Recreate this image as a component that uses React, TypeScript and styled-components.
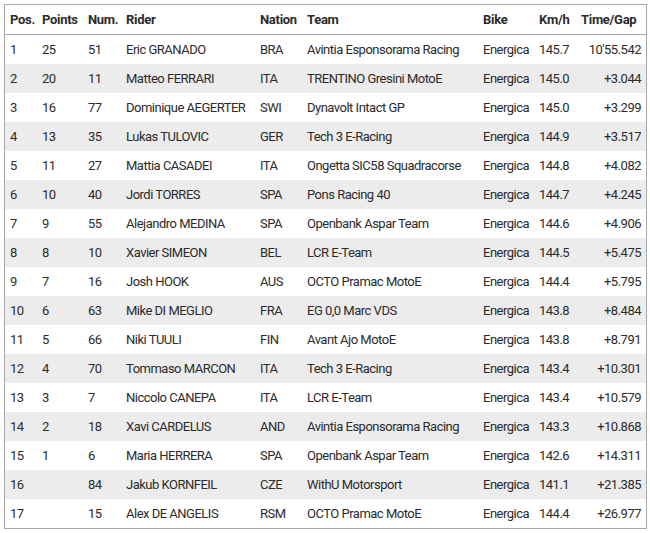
import React from "react";
import styled, { createGlobalStyle } from "styled-components";

const Global = createGlobalStyle`
  html, body { margin: 0; padding: 0; background: #fff; }
  body { padding: 4px; font-family: Roboto, "Noto Sans", sans-serif; }
`;

const cols = "32px 46px 38px 134px 47px 176px 56px 42px 1fr";

const Table = styled.div`
  width: 643px;
  box-sizing: border-box;
  border: 1px solid #a8a8a8;
  color: #2b2b2b;
  font-size: 13px;
  letter-spacing: -0.5px;
`;

const Row = styled.div<{ $band?: boolean; $head?: boolean }>`
  display: grid;
  grid-template-columns: ${cols};
  align-items: center;
  height: 29px;
  background: ${(p) => (p.$band ? "#ececec" : "#fff")};
  font-weight: ${(p) => (p.$head ? 700 : 400)};
  letter-spacing: ${(p) => (p.$head ? "-0.3px" : "-0.5px")};
  border-bottom: ${(p) => (p.$head ? "1px solid #a8a8a8" : "none")};
`;

const Cell = styled.div<{ $right?: boolean }>`
  padding-left: 5px;
  padding-right: ${(p) => (p.$right ? "5px" : "0")};
  text-align: ${(p) => (p.$right ? "right" : "left")};
  white-space: nowrap;
  overflow: hidden;
`;

type R = [string, string, string, string, string, string, string, string, string];

const data: R[] = [
  ["1", "25", "51", "Eric GRANADO", "BRA", "Avintia Esponsorama Racing", "Energica", "145.7", "10'55.542"],
  ["2", "20", "11", "Matteo FERRARI", "ITA", "TRENTINO Gresini MotoE", "Energica", "145.0", "+3.044"],
  ["3", "16", "77", "Dominique AEGERTER", "SWI", "Dynavolt Intact GP", "Energica", "145.0", "+3.299"],
  ["4", "13", "35", "Lukas TULOVIC", "GER", "Tech 3 E-Racing", "Energica", "144.9", "+3.517"],
  ["5", "11", "27", "Mattia CASADEI", "ITA", "Ongetta SIC58 Squadracorse", "Energica", "144.8", "+4.082"],
  ["6", "10", "40", "Jordi TORRES", "SPA", "Pons Racing 40", "Energica", "144.7", "+4.245"],
  ["7", "9", "55", "Alejandro MEDINA", "SPA", "Openbank Aspar Team", "Energica", "144.6", "+4.906"],
  ["8", "8", "10", "Xavier SIMEON", "BEL", "LCR E-Team", "Energica", "144.5", "+5.475"],
  ["9", "7", "16", "Josh HOOK", "AUS", "OCTO Pramac MotoE", "Energica", "144.4", "+5.795"],
  ["10", "6", "63", "Mike DI MEGLIO", "FRA", "EG 0,0 Marc VDS", "Energica", "143.8", "+8.484"],
  ["11", "5", "66", "Niki TUULI", "FIN", "Avant Ajo MotoE", "Energica", "143.8", "+8.791"],
  ["12", "4", "70", "Tommaso MARCON", "ITA", "Tech 3 E-Racing", "Energica", "143.4", "+10.301"],
  ["13", "3", "7", "Niccolo CANEPA", "ITA", "LCR E-Team", "Energica", "143.4", "+10.579"],
  ["14", "2", "18", "Xavi CARDELUS", "AND", "Avintia Esponsorama Racing", "Energica", "143.3", "+10.868"],
  ["15", "1", "6", "Maria HERRERA", "SPA", "Openbank Aspar Team", "Energica", "142.6", "+14.311"],
  ["16", "", "84", "Jakub KORNFEIL", "CZE", "WithU Motorsport", "Energica", "141.1", "+21.385"],
  ["17", "", "15", "Alex DE ANGELIS", "RSM", "OCTO Pramac MotoE", "Energica", "144.4", "+26.977"],
];

const headers = ["Pos.", "Points", "Num.", "Rider", "Nation", "Team", "Bike", "Km/h", "Time/Gap"];

export default function App() {
  return (
    <>
      <Global />
      <Table>
        <Row $head>
          {headers.map((h) => (
            <Cell key={h}>{h}</Cell>
          ))}
        </Row>
        {data.map((r, idx) => (
          <Row key={idx} $band={idx % 2 === 1}>
            {r.map((c, i) => (
              <Cell key={i} $right={i === 8}>{c}</Cell>
            ))}
          </Row>
        ))}
      </Table>
    </>
  );
}
